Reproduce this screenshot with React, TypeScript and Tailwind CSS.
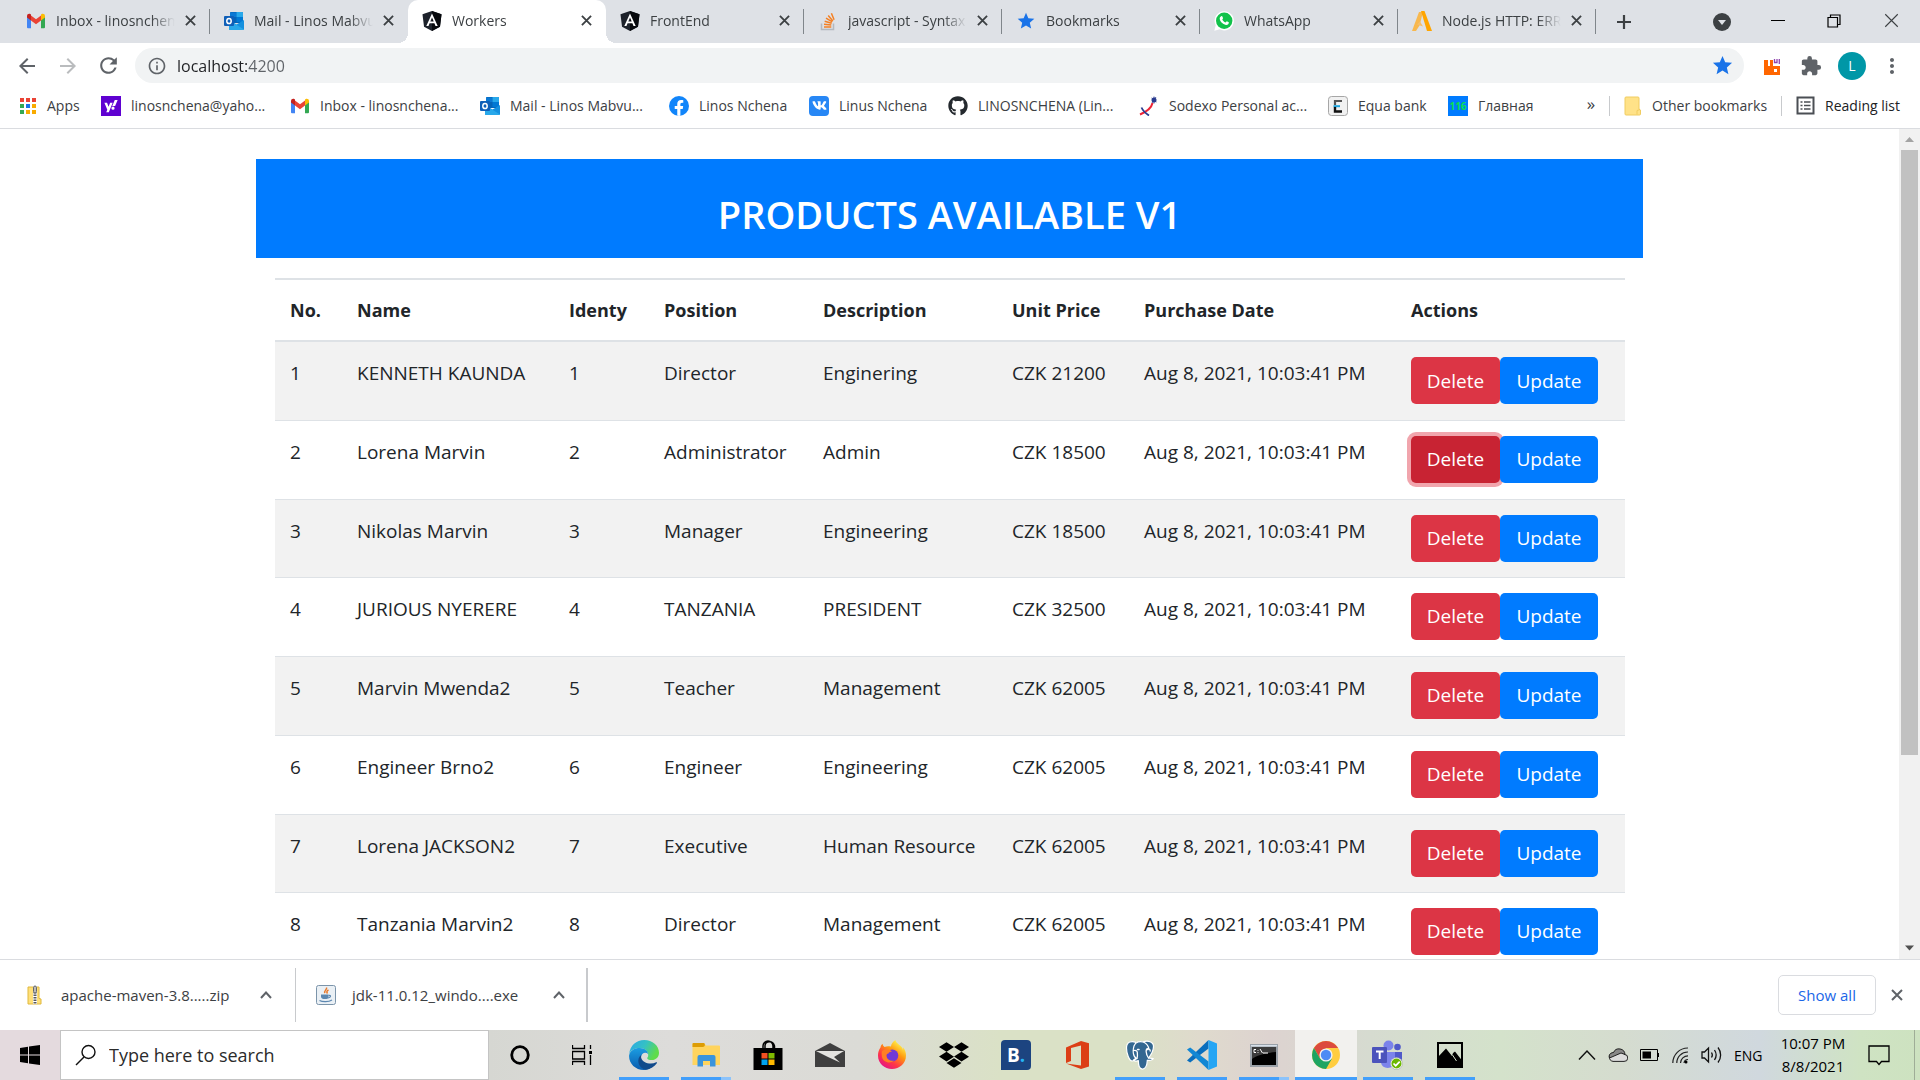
import React from "react";
import { FaGithub, FaVk, FaYahoo, FaDropbox, FaFacebookF } from "react-icons/fa";
import { MdStar, MdRefresh, MdArrowBack, MdArrowForward, MdOutlineInfo, MdMoreVert, MdExtension } from "react-icons/md";

type IconProps = { size?: number };

const Gmail = ({ size = 20 }: IconProps) => (
  <svg width={size} height={size} viewBox="0 0 20 20" aria-hidden="true">
    <path d="M1 5v11.200a1 1 0 0 0 1 1h3V8.500z" fill="#4285f4" />
    <path d="M19 5v11.200a1 1 0 0 1-1 1h-3V8.500z" fill="#34a853" />
    <path d="M5 4.500l5 3.800 5-3.800v5L10 13.300 5 9.500z" fill="#ea4335" />
    <path d="M1 5.200c0-2.200 2.200-2.900 3.600-1.900L5 3.600v5.900L1 6.500z" fill="#c5221f" />
    <path d="M19 5.200c0-2.200-2.200-2.900-3.600-1.900l-.4.300v5.900l4-3z" fill="#fbbc04" />
  </svg>
);

const Outlook = () => (
  <svg width="20" height="20" viewBox="0 0 20 20" aria-hidden="true">
    <path d="M7 1h11a1 1 0 0 1 1 1v10H6V2a1 1 0 0 1 1-1z" fill="#0364b8" />
    <path d="M6 1.500h6.500V6H6z" fill="#0a78d4" />
    <path d="M12.500 1H18a1 1 0 0 1 1 1v4h-6.500z" fill="#28a8ea" />
    <path d="M12.500 6H19v5h-6.500z" fill="#0078d4" />
    <path d="M5 9l7.500 4.500L20 9v9a1 1 0 0 1-1 1H6a1 1 0 0 1-1-1z" fill="#1490df" />
    <path d="M5 9l15 9.500-1 .5H6a1 1 0 0 1-1-1z" fill="#28a8ea" />
    <rect x="0" y="5" width="10" height="10" rx="1" fill="#0f5fb8" />
    <ellipse cx="5" cy="10" rx="2.200" ry="2.600" fill="none" stroke="#fff" strokeWidth="1.500" />
  </svg>
);

const Angular = () => (
  <svg width="20" height="20" viewBox="0 0 20 20" aria-hidden="true">
    <path d="M10 0l9.500 3.300-1.500 12.400L10 20l-8-4.300L.5 3.300z" fill="#1d222b" />
    <path d="M10 0l9.500 3.300-1.500 12.400L10 20z" fill="#07090d" />
    <path d="M10 2.500L4.300 15h2.200l1.100-2.800h4.800l1.100 2.800h2.200zm0 4l1.700 4H8.300z" fill="#fff" />
  </svg>
);

const StackOverflow = () => (
  <svg width="20" height="20" viewBox="0 0 20 20" aria-hidden="true">
    <path d="M3.500 12.500v6h12v-6" fill="none" stroke="#b4b9be" strokeWidth="1.500" />
    <path d="M6 16h7.300M6 13.200l7.300.8M6.700 10.300l7 2M8 7.200l6.300 3.700M10.200 4.500l4.700 5.400M13.400 2.300l2.700 6.500" stroke="#f48024" strokeWidth="1.500" />
  </svg>
);

const Star = ({ size = 20 }: IconProps) => <MdStar size={size} color="#1a73e8" />;

const WhatsApp = () => (
  <svg width="20" height="20" viewBox="0 0 20 20" aria-hidden="true">
    <path d="M10.200.2a9.600 9.600 0 0 0-8.500 14.100L.3 19.700l5.500-1.400A9.600 9.600 0 1 0 10.200.2z" fill="#fff" />
    <circle cx="10.200" cy="9.800" r="8.200" fill="#12c24b" />
    <path d="M7.200 5.300c.5-.4 1-.2 1.200.3l.7 1.600-.8 1.300c.7 1.400 1.700 2.300 3.200 3l1.300-1.200 2 1c.3 1.700-1.300 2.800-2.800 2.600-3.300-.6-6.400-3.800-6.300-6.600 0-.8.500-1.400 1.500-2z" fill="#fff" />
  </svg>
);

const AssetA = () => (
  <svg width="20" height="20" viewBox="0 0 20 20" aria-hidden="true">
    <path d="M7 1h4L7.500 14.500 4 20H0z" fill="#f8b84e" />
    <path d="M9 0h3.500L20 20h-5z" fill="#ffa500" />
    <path d="M5 13.500l3-3 3 5z" fill="#f5be6b" />
  </svg>
);

const Close = ({ size = 11, w = 2 }: IconProps & { w?: number }) => (
  <svg width={size} height={size} viewBox="0 0 12 12" stroke="currentColor" strokeWidth={w} aria-hidden="true">
    <path d="M1 1l10 10M11 1L1 11" />
  </svg>
);

const AppsGrid = () => (
  <svg width="18" height="18" viewBox="0 0 18 18" aria-hidden="true">
    {["#ea4335", "#ea4335", "#ea4335", "#34a853", "#1a73e8", "#f9ab00", "#34a853", "#f9ab00", "#f9ab00"].map((c, i) => (
      <rect key={i} x={(i % 3) * 6 + 1} y={Math.floor(i / 3) * 6 + 1} width="4" height="4" fill={c} />
    ))}
  </svg>
);

const Yahoo = () => (
  <span className="flex size-5 items-center justify-center bg-[#5f01d1] text-white">
    <FaYahoo size={14} />
  </span>
);
const Facebook = () => (
  <span className="flex size-5 items-end justify-center overflow-hidden rounded-full bg-[#1185fa] text-white">
    <FaFacebookF size={16} />
  </span>
);
const Vk = () => (
  <span className="flex size-5 items-center justify-center rounded bg-[#2787f5] text-white">
    <FaVk size={15} />
  </span>
);
const Sodexo = () => (
  <svg width="20" height="20" viewBox="0 0 20 20" aria-hidden="true">
    <circle cx="15" cy="4" r="2.500" fill="#2a3b8f" />
    <path d="M12.500 2l5 4M17 1l-4 6M15 .5v7" stroke="#2a3b8f" strokeWidth=".8" />
    <path d="M13.500 7C12.500 12 8 15.500 1 18.500" stroke="#ee2436" strokeWidth="2" fill="none" />
    <path d="M2.500 11.500c1.500 3.500 3.500 5.500 7.500 8" stroke="#2a3b8f" strokeWidth="1.800" fill="none" />
  </svg>
);
const Equa = () => (
  <svg width="20" height="20" viewBox="0 0 20 20" aria-hidden="true">
    <rect x=".5" y=".5" width="19" height="19" rx="3" fill="#f1f1f1" stroke="#a6a6a6" />
    <path d="M14 5H7v4" fill="none" stroke="#555" strokeWidth="2.200" />
    <path d="M5.500 10.200H12" stroke="#1ba3dd" strokeWidth="2" />
    <path d="M7 11v4.500h7" fill="none" stroke="#111" strokeWidth="2.400" />
  </svg>
);
const Home116 = () => (
  <span className="flex size-5 items-center justify-center bg-[#007bff] text-[10px] font-bold leading-5 text-[#0be04f]">116</span>
);
const NoteFolder = () => (
  <svg width="18" height="20" viewBox="0 0 18 20" aria-hidden="true">
    <path d="M1 2a1 1 0 0 1 1-1h12a1 1 0 0 1 1 1v11l1.500 1v4a1 1 0 0 1-1 1H2a1 1 0 0 1-1-1z" fill="#ffe288" stroke="#f0cc60" />
    <path d="M13 18.500v-4l3-1" fill="none" stroke="#f0cc60" />
  </svg>
);
const ReadingList = () => (
  <svg width="19" height="19" viewBox="0 0 19 19" fill="none" stroke="#4b4f54" aria-hidden="true">
    <rect x="1.500" y="1.500" width="16" height="16" strokeWidth="2" />
    <path d="M4.500 6h2M4.500 9.500h2M4.500 13h2M8 6h6.500M8 9.500h6.500M8 13h6.500" strokeWidth="1.500" />
  </svg>
);

const tabs = [
  { title: "Inbox - linosnchena", icon: <Gmail /> },
  { title: "Mail - Linos Mabvure", icon: <Outlook /> },
  { title: "Workers", icon: <Angular />, active: true },
  { title: "FrontEnd", icon: <Angular /> },
  { title: "javascript - Syntax E", icon: <StackOverflow /> },
  { title: "Bookmarks", icon: <Star /> },
  { title: "WhatsApp", icon: <WhatsApp /> },
  { title: "Node.js HTTP: ERR_", icon: <AssetA /> },
];

const TabStrip = () => (
  <header className="flex h-[43px] shrink-0 bg-[#dee1e6] pl-3 text-[#3c4043]">
    <nav className="flex">
      {tabs.map((t, i) => (
        <div
          key={i}
          className={
            t.active
              ? "relative flex w-[198px] items-center rounded-t-[10px] bg-white px-3.5 pb-0.5"
              : "relative flex w-[198px] items-center px-3.5 pb-0.5"
          }
        >
          {t.active && (
            <>
              <span className="absolute -left-2.5 bottom-0 size-2.5 bg-[radial-gradient(circle_at_0_0,transparent_10px,white_10px)]" />
              <span className="absolute -right-2.5 bottom-0 size-2.5 bg-[radial-gradient(circle_at_100%_0,transparent_10px,white_10px)]" />
            </>
          )}
          <span className="flex w-5 shrink-0 justify-center">{t.icon}</span>
          <a
            href="#tab"
            className="ml-2.5 mr-2.5 min-w-0 flex-1 overflow-hidden whitespace-nowrap text-[14px] leading-5 [mask-image:linear-gradient(to_right,black_80%,transparent)]"
          >
            {t.title}
          </a>
          <button aria-label="Close tab" className="shrink-0">
            <Close />
          </button>
          {i !== 1 && i !== 2 && <span className="absolute right-0 top-[9px] h-[25px] w-px bg-[#80868b]" />}
        </div>
      ))}
    </nav>
    <button aria-label="New tab" className="ml-5 flex w-4 items-center justify-center">
      <svg width="16" height="16" viewBox="0 0 16 16" stroke="#3c4043" strokeWidth="2.200">
        <path d="M8 1v14M1 8h14" />
      </svg>
    </button>
    <div className="ml-auto flex items-center pb-0.5">
      <button aria-label="Search tabs" className="flex w-[58px] justify-center pt-0.5">
        <svg width="18" height="18" viewBox="0 0 18 18">
          <circle cx="9" cy="9" r="9" fill="#3c4043" />
          <path d="M5 7h8l-4 5z" fill="#dee1e6" />
        </svg>
      </button>
      <button aria-label="Minimize" className="flex h-[38px] w-[54px] items-center justify-center">
        <svg width="14" height="2" viewBox="0 0 14 2"><path d="M0 .5h14" stroke="#000" /></svg>
      </button>
      <button aria-label="Restore" className="flex h-[38px] w-[57px] items-center justify-center">
        <svg width="14" height="14" viewBox="0 0 14 14" fill="none" stroke="#000" strokeWidth="1.200">
          <path d="M1 3.500h9.500V13H1zM3.500 3.500V1H13v9.500h-2.500" />
        </svg>
      </button>
      <button aria-label="Close window" className="flex h-[38px] w-[58px] items-center justify-center">
        <Close size={15} w={0.9} />
      </button>
    </div>
  </header>
);

const Toolbar = () => (
  <div className="flex h-[45px] shrink-0 items-center bg-white text-[#5f6368]">
    <button aria-label="Back" className="ml-4 flex w-[22px] justify-center"><MdArrowBack size={24} className="shrink-0" /></button>
    <button aria-label="Forward" className="ml-[19px] flex w-[22px] justify-center text-[#babcbe]"><MdArrowForward size={24} className="shrink-0" /></button>
    <button aria-label="Reload" className="ml-[18px] flex w-[22px] justify-center"><MdRefresh size={25} className="shrink-0" /></button>
    <div className="ml-4 flex h-[35px] flex-1 items-center rounded-full bg-[#f1f3f4] pl-3 pr-2.5">
      <MdOutlineInfo size={20} />
      <input
        aria-label="Address"
        className="ml-2.5 min-w-0 flex-1 bg-[linear-gradient(to_right,#202124_70px,#5f6368_70px)] bg-clip-text text-[16px] leading-6 text-transparent caret-black outline-none"
        defaultValue="localhost:4200"
      />
      <button aria-label="Edit bookmark"><Star size={23} /></button>
    </div>
    <button aria-label="RabbitMQ extension" className="ml-5 mt-0.5">
      <svg width="16" height="16" viewBox="0 0 16 16">
        <path d="M0 1h4v6h2V1h3v6h7v9H0z" fill="#ff6600" />
        <path d="M10.500 0v3.500h2.500V0M15.300 0v5" fill="none" stroke="#8e44ad" strokeWidth="1.300" />
        <rect x="10" y="10" width="3" height="3" fill="#fff" />
      </svg>
    </button>
    <button aria-label="Extensions" className="ml-5"><MdExtension size={22} /></button>
    <button className="ml-4 size-7 rounded-full bg-[#0097a7] text-[14px] text-white">L</button>
    <button aria-label="Menu" className="ml-3.5 mr-4"><MdMoreVert size={24} /></button>
  </div>
);

const bookmarks = [
  { label: "Apps", icon: <AppsGrid />, w: "w-[82px]" },
  { label: "linosnchena@yaho...", icon: <Yahoo />, w: "w-[189px]" },
  { label: "Inbox - linosnchena...", icon: <Gmail />, w: "w-[190px]" },
  { label: "Mail - Linos Mabvu...", icon: <Outlook />, w: "w-[189px]" },
  { label: "Linos Nchena", icon: <Facebook />, w: "w-[140px]" },
  { label: "Linus Nchena", icon: <Vk />, w: "w-[139px]" },
  { label: "LINOSNCHENA (Lin...", icon: <FaGithub size={20} color="#24292e" />, w: "w-[191px]" },
  { label: "Sodexo Personal ac...", icon: <Sodexo />, w: "w-[189px]" },
  { label: "Equa bank", icon: <Equa />, w: "w-[120px]" },
  { label: "Главная", icon: <Home116 />, w: "w-[120px]" },
];

const BookmarkBar = () => (
  <nav className="flex h-[41px] shrink-0 items-center border-b border-[#dadce0] bg-white pb-[5px] pl-[19px] pr-5 text-[14px] leading-5 text-[#3c4043]">
    {bookmarks.map((b) => (
      <a key={b.label} href="#bookmark" className={`flex shrink-0 items-center gap-2.5 whitespace-nowrap ${b.w}`}>
        <span className="shrink-0">{b.icon}</span>
        {b.label}
      </a>
    ))}
    <button aria-label="More bookmarks" className="ml-auto mr-3.5 pb-1 text-[17px]">»</button>
    <span className="h-5 w-px bg-[#c8cacd]" />
    <a href="#other" className="ml-3.5 flex items-center gap-2.5 whitespace-nowrap"><NoteFolder />Other bookmarks</a>
    <span className="ml-3.5 h-5 w-px bg-[#c8cacd]" />
    <button className="ml-3.5 flex items-center gap-2.5 whitespace-nowrap text-[#202124]"><ReadingList />Reading list</button>
  </nav>
);

const columns = [
  { name: "No.", w: "w-[67px]" },
  { name: "Name", w: "w-[212px]" },
  { name: "Identy", w: "w-[95px]" },
  { name: "Position", w: "w-[159px]" },
  { name: "Description", w: "w-[189px]" },
  { name: "Unit Price", w: "w-[132px]" },
  { name: "Purchase Date", w: "w-[267px]" },
  { name: "Actions", w: "w-[229px]" },
];

const rows = [
  ["KENNETH KAUNDA", "Director", "Enginering", "21200"],
  ["Lorena Marvin", "Administrator", "Admin", "18500"],
  ["Nikolas Marvin", "Manager", "Engineering", "18500"],
  ["JURIOUS NYERERE", "TANZANIA", "PRESIDENT", "32500"],
  ["Marvin Mwenda2", "Teacher", "Management", "62005"],
  ["Engineer Brno2", "Engineer", "Engineering", "62005"],
  ["Lorena JACKSON2", "Executive", "Human Resource", "62005"],
  ["Tanzania Marvin2", "Director", "Management", "62005"],
];

const Page = () => (
  <div className="flex min-h-0 flex-1 bg-white">
    <main className="min-w-0 flex-1 overflow-hidden pt-[30px] text-[#212529]">
      <div className="mx-auto max-w-[1387px]">
        <h1 className="flex h-[99px] items-center justify-center bg-[#007bff] pt-2.5 text-[38px] font-semibold leading-[48px] text-white">
          PRODUCTS AVAILABLE V1
        </h1>
        <div className="px-[19px] pt-5">
          <table className="w-full table-fixed border-collapse text-[19px] leading-[30px]">
            <thead>
              <tr className="h-[62px] border-y-2 border-[#dee2e6] text-[18px]">
                {columns.map((c) => (
                  <th key={c.name} scope="col" className={`${c.w} whitespace-nowrap px-[15px] text-left font-bold`}>{c.name}</th>
                ))}
              </tr>
            </thead>
            <tbody>
              {rows.map(([name, position, description, price], i) => (
                <tr key={name} className="h-[79px] whitespace-nowrap border-t border-[#dee2e6] odd:bg-[#f2f2f2] nth-[4n+3]:h-[78px]">
                  {[i + 1, name, i + 1, position, description, `CZK ${price}`, "Aug 8, 2021, 10:03:41 PM"].map((v, k) => (
                    <td key={k} className="px-[15px] pt-4 align-top">{v}</td>
                  ))}
                  <td className="px-[15px] pt-[15px] align-top">
                    <div className="flex">
                      <button
                        className={
                          i === 1
                            ? "h-[47px] w-[89px] rounded-[5px] bg-[#c82333] text-white ring-4 ring-[#f1a5ad]"
                            : "h-[47px] w-[89px] rounded-[5px] bg-[#dc3545] text-white"
                        }
                      >
                        Delete
                      </button>
                      <button className="relative h-[47px] w-[98px] rounded-[5px] bg-[#007bff] text-white">Update</button>
                    </div>
                  </td>
                </tr>
              ))}
            </tbody>
          </table>
        </div>
      </div>
    </main>
    <div aria-hidden="true" className="flex w-[21px] shrink-0 flex-col items-center bg-[#f1f1f1]">
      <svg width="21" height="21" viewBox="0 0 21 21" className="shrink-0"><path d="M6 13l4.500-5 4.500 5z" fill="#a3a3a3" /></svg>
      <div className="w-[17px] flex-[605] bg-[#c1c1c1]" />
      <div className="flex-[183]" />
      <svg width="21" height="21" viewBox="0 0 21 21" className="shrink-0"><path d="M6 7.500l4.500 5 4.500-5z" fill="#505050" /></svg>
    </div>
  </div>
);

const Chevron = () => (
  <svg width="14" height="10" viewBox="0 0 14 10" fill="none" stroke="#5f6368" strokeWidth="2" aria-hidden="true">
    <path d="M2 8l5-5.500L12 8" />
  </svg>
);

const ZipIcon = () => (
  <svg width="20" height="20" viewBox="0 0 20 20" aria-hidden="true">
    <path d="M3 2h11v11.500l2 .5v5H3z" fill="#ffe07a" stroke="#e0b83c" />
    <path d="M10 0v19" stroke="#fff" strokeWidth="4" />
    <path d="M10 2v17" stroke="#5a5a5a" strokeWidth="3" strokeDasharray="1.500 1" />
    <rect x="8.500" y="1" width="3" height="7" rx="1.500" fill="#bbb" stroke="#666" />
  </svg>
);
const JavaIcon = () => (
  <svg width="20" height="20" viewBox="0 0 20 20" fill="none" aria-hidden="true">
    <rect x=".5" y=".5" width="19" height="19" rx="2" fill="#eaf0f5" stroke="#7b94aa" />
    <path d="M10.500 2.500c1 2-3 3-1.500 5.500M12.500 5c-2 1-2 2-1 3.500" stroke="#e8792b" strokeWidth="1.500" />
    <path d="M5 9.500h7.500v2.200c0 2-1.500 2.300-3.700 2.300S5 13.500 5 11.700z" fill="#5c87b0" />
    <path d="M12.500 10.500c3-.5 2.500 2-.5 2.500M3.500 15.500c3 1.700 9 1.700 12.500-.5" stroke="#5c87b0" strokeWidth="1.200" />
  </svg>
);

const Downloads = () => (
  <section className="flex h-[71px] shrink-0 items-center border-t border-[#dadce0] bg-white text-[15px] leading-5 text-[#3c4043]">
    <div className="flex h-[54px] w-[296px] items-center border-r border-[#c8cacd] pl-[25px] pr-[22px]">
      <ZipIcon />
      <a href="#zip" className="ml-4 flex-1 whitespace-nowrap">apache-maven-3.8.....zip</a>
      <button aria-label="Archive options"><Chevron /></button>
    </div>
    <div className="flex h-[54px] w-[292px] items-center border-r-2 border-[#c8cacd] pl-5 pr-5">
      <JavaIcon />
      <a href="#exe" className="ml-4 flex-1 whitespace-nowrap">jdk-11.0.12_windo....exe</a>
      <button aria-label="Installer options"><Chevron /></button>
    </div>
    <button className="ml-auto h-10 w-[98px] rounded-[5px] border border-[#dadce0] text-[#1a66e8]">Show all</button>
    <button aria-label="Close downloads" className="ml-[15px] mr-[17px] text-[#5f6368]"><Close size={12} /></button>
  </section>
);

const Edge = () => (
  <svg width="30" height="30" viewBox="0 0 30 30">
    <defs>
      <linearGradient id="edge-top" x1="0" y1="0" x2="1" y2=".4"><stop offset="0" stopColor="#2aa7e8" /><stop offset=".55" stopColor="#35c1c4" /><stop offset="1" stopColor="#5fdc4a" /></linearGradient>
      <linearGradient id="edge-left" x1="0" y1="0" x2="0" y2="1"><stop offset="0" stopColor="#1b9de2" /><stop offset="1" stopColor="#0a5cae" /></linearGradient>
    </defs>
    <path d="M.2 14C1 5.500 7.500 0 15.200 0 23.500 0 30 5.700 30 12.700c0 4.200-3 7.300-7.200 7.300-3 0-5-1-4.600-2.100.3-.7 1-1.200 1-3 0-3.600-3.600-6.900-8.400-6.900C5.500 8 1.500 10.500.2 14z" fill="url(#edge-top)" />
    <path d="M.1 15.500C.8 10.500 5.500 8 10.800 8c4.800 0 8.200 3 8.300 6-2.500-2.500-7-1-7.100 3.500 0 5 5 9.300 11.500 8.700C20.700 29 17.500 30 15 30 6 30-.3 23 .1 15.500z" fill="url(#edge-left)" />
    <path d="M12.300 14.800c-5.300 4-3.500 13.200 4.500 15 4.700-.6 8.700-3 11.200-6.800.3-.7-.2-1-.8-.7-6 3-13.700.2-15-4.300-.3-1.100-.2-2.200.1-3.200z" fill="#114a8b" />
  </svg>
);
const Explorer = () => (
  <svg width="28" height="24" viewBox="0 0 28 24">
    <path d="M.5 1a1 1 0 0 1 1-1H12l2 2.500H27a1 1 0 0 1 1 1V22H.5z" fill="#ffd45e" />
    <path d="M.5 4V1a1 1 0 0 1 1-1H12c1.500 1 1 4-1 4z" fill="#dd9c05" />
    <path d="M5.500 23.500V14a2 2 0 0 1 2-2h14a2 2 0 0 1 2 2v9.500H18V18h-7v5.500z" fill="#3a94dc" />
  </svg>
);
const Store = () => (
  <svg width="30" height="30" viewBox="0 0 30 30">
    <path d="M10 8V6a5 5 0 0 1 10 0v2M12 8V5.500C12.500 1 20 0 21.500 6v2" fill="none" stroke="#000" strokeWidth="1.500" />
    <path d="M.5 8h29v22h-29z" fill="#000" />
    <path d="M8.500 13h6v5.500h-6z" fill="#f25022" /><path d="M15.500 13h6v5.500h-6z" fill="#7fba00" />
    <path d="M8.500 19.500h6V25h-6z" fill="#00a4ef" /><path d="M15.500 19.500h6V25h-6z" fill="#ffb900" />
  </svg>
);
const MailApp = () => (
  <svg width="30" height="24" viewBox="0 0 30 24">
    <path d="M0 8L15 0l15 8v16H0z" fill="#3f3f3f" />
    <path d="M1 8h28L19 14l6 5.500L13 14z" fill="#e4e3e0" />
  </svg>
);
const Firefox = () => (
  <svg width="30" height="30" viewBox="0 0 30 30">
    <defs>
      <linearGradient id="fx-body" x1=".8" y1=".1" x2=".2" y2=".95"><stop offset="0" stopColor="#fff44f" /><stop offset=".35" stopColor="#ff980e" /><stop offset=".7" stopColor="#ff3647" /><stop offset="1" stopColor="#e31587" /></linearGradient>
    </defs>
    <path d="M3.500 7.500c.3-1.700 1-2.700 2-3.700.3 1.500 1 2.500 2 3.200 2-1 4.500-1 6.500-.5C14 4 16 1.500 18.500 0c0 4 7 5 7.500 10 .3-1 .2-2-.2-3C28.500 10 29 13 29 15.500 29 23.500 22.500 29 15 29S1 23.500 1 15.500c0-3 .8-6 2.500-8z" fill="url(#fx-body)" />
    <circle cx="15.300" cy="15.500" r="6" fill="#7139d6" />
    <path d="M5 11c4-3 8-2 10 .5-2 0-3.500 1-3.500 2-1.500 0-2.500 1-2 3 .5 3 4 5 7.500 4-4 4-11 1.500-12-3.500-.3-2-.5-4 0-6z" fill="#ff7f25" />
  </svg>
);
const Booking = () => (
  <span className="flex size-[30px] items-center justify-center rounded-[4px] rounded-bl-none bg-[#1c4480] text-[19px] font-bold text-white">
    B<span className="text-[#24b5f5]">.</span>
  </span>
);
const Office = () => (
  <svg width="24" height="28" viewBox="0 0 24 28">
    <path d="M0 6.500L15 0l8 2.300v23.200L15 28 0 22.500l15 2V4.500L5 7v13l-5 2z" fill="#dc3e15" />
  </svg>
);
const Postgres = () => (
  <svg width="30" height="30" viewBox="0 0 30 30" stroke="#fff" strokeLinejoin="round" strokeLinecap="round">
    <path d="M11 2.500C7 .5 1.500 1.500 1.500 8c0 5 2.500 12.500 5.500 13 1.500.2 2.500-1.500 3.500-2.500z" fill="#336791" strokeWidth="1.200" />
    <path d="M18 2c5-2 10.500 0 10.500 4.500 0 5-3 9-5 11.500 2 .5 4 .2 4.800.5-.8 1.800-4 2.300-6 1.700-.3 3.500-.2 8.300-4.300 8.800-4.500.5-4.500-5-4.700-8.500-1.800.8-3.800.5-4.800-.3 1-1 2.500-.5 3.300-1.700C8 17 7.500 11 9 6c1.500-4.500 6.500-5 9-4z" fill="#336791" strokeWidth="1.200" />
    <path d="M12 18.500c.8-2 .5-4 .3-6 0-2-2.300-2.500-3.800-2M23.500 18c-3-4.500-3-9-.8-9.300 1.500-.2 2.500 1 2.500 2.300M18.500 2c3 1.500 5 4 5.300 7" fill="none" strokeWidth="1.300" />
    <path d="M12.500 9.500h1.500M22 9.500h1" strokeWidth="1.500" />
  </svg>
);
const VsCode = () => (
  <svg width="30" height="30" viewBox="0 0 30 30">
    <path d="M0 20.500L21.500 0v8.500L3.200 22.500z" fill="#0a6ebd" />
    <path d="M3.200 7.500L21.500 21.500V30L0 9.500z" fill="#1287d4" />
    <path d="M21.500 0L30 3.500v23L21.500 30z" fill="#25a5f4" />
  </svg>
);
const Terminal = () => (
  <svg width="28" height="23" viewBox="0 0 28 23">
    <path d="M0 0h28v23H0z" fill="#9aa1a8" /><path d="M1 1h26v1.500H1z" fill="#d8e1ea" />
    <path d="M2 3h24v18H2z" fill="#000" />
    <path d="M2 3h24v5C15 9 7 11 2 15z" fill="#3c3c3c" />
    <path d="M6 5.500H4v3h2M8 6v.8M8 8v.8M10 5l2.500 4M13 9h5" fill="none" stroke="#fff" />
  </svg>
);
const Chrome = () => (
  <svg width="28" height="28" viewBox="0 0 28 28">
    <circle cx="14" cy="14" r="14" fill="#ffcd40" />
    <path d="M1.900 7A14 14 0 0 1 26.100 7H14l-6 10.500z" fill="#dc4b3e" />
    <path d="M1.900 7A14 14 0 0 0 14 28l6-10.500-12 0z" fill="#1da462" />
    <circle cx="14" cy="14" r="6.600" fill="#f1f1f1" /><circle cx="14" cy="14" r="5.200" fill="#4c8bf5" />
  </svg>
);
const Teams = () => (
  <svg width="32" height="30" viewBox="0 0 32 30">
    <circle cx="16.500" cy="5.500" r="5" fill="#7b83eb" /><circle cx="25.500" cy="7" r="3.300" fill="#5059c9" />
    <path d="M20 12h10v8c0 3-2 5-5 5h-5z" fill="#5059c9" /><path d="M9 12h14v9c0 9-14 9-14 1z" fill="#7b83eb" />
    <rect x="0" y="7" width="15" height="16" rx="1" fill="#4b53bc" />
    <path d="M4 11.500h7.500M7.700 11.500V19" stroke="#fff" strokeWidth="2" />
    <circle cx="24.500" cy="23.500" r="6" fill="#fff" stroke="#999" strokeWidth=".5" /><circle cx="24.500" cy="23.500" r="5" fill="#6bb700" />
    <path d="M21.500 23.500l2.200 2.200 4-4" fill="none" stroke="#fff" strokeWidth="1.700" />
  </svg>
);
const Photos = () => (
  <svg width="26" height="26" viewBox="0 0 26 26">
    <rect x="1" y="1" width="24" height="24" fill="none" stroke="#000" strokeWidth="2" />
    <path d="M1 15l8-8.500 6 7.500 1-3 2-1.500 7 9V25H1z" fill="#000" />
    <path d="M15.500 13l4 6" stroke="#d6e2ce" />
  </svg>
);
const Cortana = () => (
  <svg width="20" height="20" viewBox="0 0 20 20"><circle cx="10" cy="10" r="8.300" fill="none" stroke="#000" strokeWidth="2.800" /></svg>
);
const TaskView = () => (
  <svg width="20" height="20" viewBox="0 0 20 20" fill="none" stroke="#000">
    <path d="M.5 0v3.500h12V0M.5 20v-3.500h12V20M.5 6.500h12v7.500H.5zM18.500 0v4M18.500 10v10" strokeWidth="1.300" />
    <path d="M17 6h3v3h-3z" fill="#000" stroke="none" />
  </svg>
);

type TaskApp = { name: string; icon: React.ReactNode; state?: "open" | "multi" | "active" };
const apps: TaskApp[] = [
  { name: "Cortana", icon: <Cortana /> },
  { name: "Task view", icon: <TaskView /> },
  { name: "Edge", icon: <Edge />, state: "open" },
  { name: "File Explorer", icon: <Explorer />, state: "multi" },
  { name: "Store", icon: <Store /> },
  { name: "Mail", icon: <MailApp /> },
  { name: "Firefox", icon: <Firefox /> },
  { name: "Dropbox", icon: <FaDropbox size={30} color="#000" /> },
  { name: "Booking", icon: <Booking /> },
  { name: "Office", icon: <Office /> },
  { name: "PostgreSQL", icon: <Postgres />, state: "open" },
  { name: "VS Code", icon: <VsCode />, state: "open" },
  { name: "Command Prompt", icon: <Terminal />, state: "multi" },
  { name: "Chrome", icon: <Chrome />, state: "active" },
  { name: "Teams", icon: <Teams />, state: "open" },
  { name: "Photos", icon: <Photos />, state: "open" },
];

const Taskbar = () => (
  <footer className="flex h-[50px] shrink-0 bg-[linear-gradient(to_right,#e4dade_0,#e4dade_60px,#d6d7d2_489px,#dddcda_670px,#dbdbd6_860px,#dae1c6_1000px,#dae1c6_1130px,#dfdacd_1200px,#ddd3d0_1270px,#d6dbd0_1370px,#d4e2cb_1500px,#d5dccf_1620px,#d0d8de_1760px,#cfe3c3_1860px,#cde2c0_1920px)] text-black">
    <button aria-label="Start" className="flex w-[60px] items-center justify-center">
      <svg width="20" height="20" viewBox="0 0 20 20"><path d="M0 3l8-1.200v7.700H0zM9 1.600L20 0v9.500H9zM0 10.500h8v7.700L0 17zM9 10.500h11V20L9 18.400z" /></svg>
    </button>
    <label className="flex w-[429px] items-center border border-[#c4c4c4] bg-white pl-3.5">
      <svg width="22" height="22" viewBox="0 0 22 22" fill="none" stroke="#111" strokeWidth="1.400" aria-hidden="true">
        <circle cx="13.500" cy="8" r="6.500" /><path d="M9 13L1 21" />
      </svg>
      <input aria-label="Type here to search" placeholder="Type here to search" className="ml-3 min-w-0 flex-1 bg-transparent text-[18px] text-black outline-none placeholder:text-[#2b2b2b] placeholder:opacity-100" />
    </label>
    {apps.map((a) => (
      <button
        key={a.name}
        aria-label={a.name}
        className={a.state === "active" ? "relative flex w-[62px] items-center justify-center bg-[#f2f1ee]" : "relative flex w-[62px] items-center justify-center"}
      >
        {a.icon}
        {a.state && (
          <span className={a.state === "active" ? "absolute inset-x-0 bottom-0 flex h-[3px] bg-[#429ffb]" : "absolute inset-x-[6px] bottom-0 flex h-[3px] bg-[#429ffb]"}>
            {a.state === "multi" && <span className="ml-auto w-2.5 bg-[#8cc3fb]" />}
          </span>
        )}
      </button>
    ))}
    <div className="ml-auto flex items-center">
      <button aria-label="Hidden icons">
        <svg width="18" height="12" viewBox="0 0 18 12" fill="none" stroke="#111" strokeWidth="1.500"><path d="M1 10.500L9 2l8 8.500" /></svg>
      </button>
      <svg className="ml-3" width="20" height="14" viewBox="0 0 20 14" fill="none" stroke="#222" aria-hidden="true">
        <path d="M5 13.400h11a3.500 3.500 0 0 0 .5-7A6 6 0 0 0 5.500 4.500 4.500 4.500 0 0 0 5 13.400z" fill="#ddd" />
        <path d="M1.500 10L13 5l4 1.500A6 6 0 0 0 5.500 4.500C2 5 .5 7 1.500 10z" fill="#888" />
      </svg>
      <svg className="ml-3" width="20" height="12" viewBox="0 0 20 12" fill="none" stroke="#000" aria-hidden="true">
        <path d="M.5.5h17v11H.5zM18.500 4v4" /><path d="M2.500 2.500H11v7H2.500z" fill="#000" stroke="none" />
      </svg>
      <svg className="ml-3" width="17" height="17" viewBox="0 0 17 17" fill="none" stroke="#222" strokeWidth="1.200" aria-hidden="true">
        <path d="M.8 16A15 15 0 0 1 16 1M4.800 16A11 11 0 0 1 16 5M8.500 16A7.500 7.500 0 0 1 16 8.800M12 16a4 4 0 0 1 4-3.500" /><circle cx="14" cy="15" r="1.500" fill="#000" stroke="none" />
      </svg>
      <svg className="ml-3" width="21" height="18" viewBox="0 0 21 18" fill="none" stroke="#111" strokeWidth="1.300" aria-hidden="true">
        <path d="M1 6h2.500L7.500 2v14l-4-4H1zM10.500 6.500c1 1.500 1 3.500 0 5M13.500 4c2 3 2 7 0 10M17 1.500c3.500 4.500 3.500 10.500 0 15" />
      </svg>
      <span className="ml-3 w-[30px] text-[14px]">ENG</span>
      <div className="ml-3.5 w-[70px] text-center text-[15px] leading-[23px]">
        <div>10:07 PM</div>
        <div>8/8/2021</div>
      </div>
      <button aria-label="Notifications" className="ml-5">
        <svg width="22" height="21" viewBox="0 0 22 21" fill="none" stroke="#000" strokeWidth="1.300"><path d="M1 1h20v15.500h-7.500L11 19.500 8.500 16.500H1z" /></svg>
      </button>
      <span className="ml-6 mr-[5px] h-[50px] w-px bg-[#9fad97]" />
    </div>
  </footer>
);

export default function App() {
  return (
    <div className="flex h-screen flex-col overflow-hidden bg-white font-['Open_Sans','Noto_Sans',sans-serif]">
      <TabStrip />
      <Toolbar />
      <BookmarkBar />
      <Page />
      <Downloads />
      <Taskbar />
    </div>
  );
}
